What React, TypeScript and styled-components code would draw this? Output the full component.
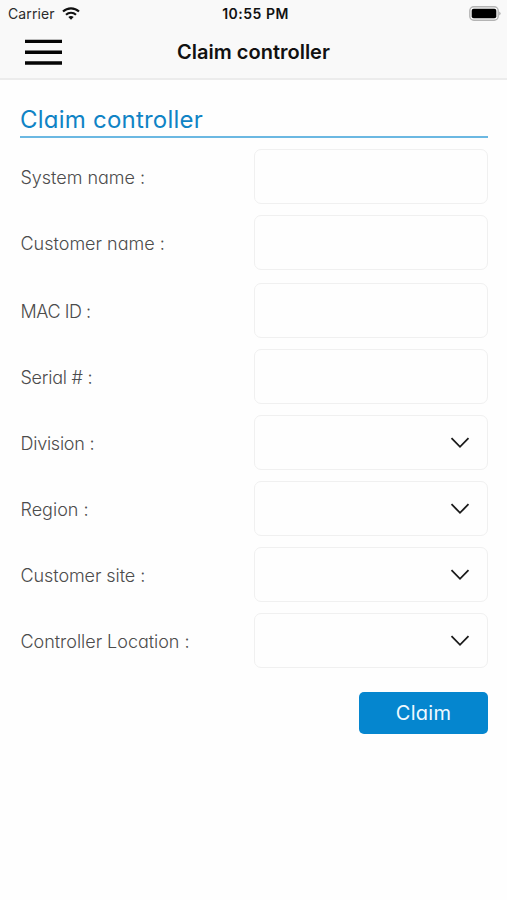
import React from "react";
import styled, { createGlobalStyle } from "styled-components";

const GlobalStyle = createGlobalStyle`
  * { box-sizing: border-box; }
  body { margin: 0; background: #fefefe; }
`;

const Screen = styled.div`
  width: 507px;
  height: 900px;
  overflow: hidden;
  background: #fefefe;
  font-family: Inter, sans-serif;
  color: #111;
`;

const Header = styled.header`
  height: 80px;
  background: #f9f9f9;
  border-bottom: 2px solid #ececec;
`;

const StatusBar = styled.div`
  display: grid;
  grid-template-columns: 1fr auto 1fr;
  align-items: center;
  height: 27px;
  padding: 0 6px 0 8px;
`;

const Carrier = styled.div`
  display: flex;
  align-items: center;
  gap: 7px;
  font-size: 14px;
  letter-spacing: 0.1px;
  color: #2b2b2b;
`;

const Clock = styled.div`
  padding-left: 2px;
  font-size: 14px;
  font-weight: 600;
  letter-spacing: 0.5px;
`;

const BatteryIcon = styled.svg`
  display: block;
  justify-self: end;
`;

const NavBar = styled.nav`
  display: grid;
  grid-template-columns: 1fr auto 1fr;
  align-items: center;
  height: 50px;
  padding: 0 25px;
`;

const MenuButton = styled.button`
  display: flex;
  flex-direction: column;
  gap: 7.5px;
  width: 37px;
  padding: 0;
  border: 0;
  background: none;
`;

const MenuIcon = styled.svg`
  display: block;
`;

const NavTitle = styled.h1`
  margin: 0;
  font-size: 20px;
  line-height: 26px;
  font-weight: 600;
  letter-spacing: 0;
`;

const Content = styled.main`
  padding: 24px 19px 0 20px;
  font-feature-settings: "cv11";
`;

const SectionTitle = styled.h2`
  margin: 0 0 11px;
  height: 34px;
  border-bottom: 2px solid #6bb8e2;
  font-size: 24px;
  line-height: 32px;
  font-weight: 400;
  letter-spacing: 0.22px;
  color: #0f83c5;
`;

const Form = styled.div`
  display: flex;
  flex-direction: column;
  gap: 11px;
`;

const Row = styled.label<{ $offset?: number }>`
  display: grid;
  grid-template-columns: 1fr 234px;
  align-items: center;
  height: 55px;
  margin-top: ${(p) => p.$offset ?? 0}px;
`;

const LabelText = styled.span<{ $tracking: number }>`
  padding: 2px 0 0 0.5px;
  font-size: 18px;
  font-weight: 300;
  line-height: 24px;
  letter-spacing: ${(p) => p.$tracking}px;
  white-space: nowrap;
  color: #4c4c4c;
`;

const Field = styled.span`
  display: flex;
  align-items: center;
  justify-content: flex-end;
  height: 55px;
  padding-right: 17px;
  border: 1.5px solid #f0f0f0;
  border-radius: 7px;
  background: #fefefe;
`;

const Actions = styled.div`
  display: flex;
  justify-content: flex-end;
  padding-top: 24px;
`;

const ClaimButton = styled.button`
  width: 129px;
  height: 42px;
  padding: 1px 0 0;
  border: 0;
  border-radius: 5px;
  background: #0586cf;
  color: #effaff;
  font: 400 20px/41px Inter, sans-serif;
  font-feature-settings: "cv11";
  letter-spacing: 0.3px;
`;

const fields = [
  { label: "System name :", tracking: -0.02 },
  { label: "Customer name :", tracking: 0 },
  { label: "MAC ID :", tracking: -0.45, offset: 2 },
  { label: "Serial # :", tracking: -0.25 },
  { label: "Division :", tracking: -0.25, select: true },
  { label: "Region :", tracking: 0, select: true },
  { label: "Customer site :", tracking: -0.08, select: true },
  { label: "Controller Location :", tracking: -0.03, select: true },
];

const Menu = () => (
  <MenuIcon width="37" height="26" viewBox="0 0 37 26" stroke="#050505" strokeWidth="3.4">
    <path d="M0 2.4h37M0 13.2h37M0 24h37" />
  </MenuIcon>
);

const Wifi = () => (
  <svg width="18" height="13" viewBox="0 0 18 13" fill="none" stroke="#111" strokeWidth="2.1">
    <path d="M1 4.6C5.4.3 12.6.3 17 4.6" />
    <path d="M4 7.7c2.8-2.7 7.2-2.7 10 0" />
    <path d="M6.3 10C7.9 8.5 10.1 8.5 11.7 10L9 12.7Z" fill="#111" stroke="none" />
  </svg>
);

const Battery = () => (
  <BatteryIcon width="32" height="15" viewBox="0 0 32 15">
    <rect x="0.8" y="0.8" width="28.4" height="13.4" rx="4" fill="#f9f9f9" stroke="#b4b4b4" strokeWidth="1.4" />
    <rect x="2.7" y="2.7" width="24.6" height="9.6" rx="2" fill="#000" />
    <path d="M30.4 5.4q2.2 2.1 0 4.2Z" fill="#999" />
  </BatteryIcon>
);

const Chevron = () => (
  <svg width="20" height="12" viewBox="0 0 20 12" fill="none" stroke="#1a1a1a" strokeWidth="1.8">
    <path d="M1.5 1.2 10 9.8l8.5-8.6" />
  </svg>
);

export default function App() {
  return (
    <Screen>
      <GlobalStyle />
      <Header>
        <StatusBar>
          <Carrier>Carrier <Wifi /></Carrier>
          <Clock>10:55 PM</Clock>
          <Battery />
        </StatusBar>
        <NavBar>
          <MenuButton aria-label="Menu"><Menu /></MenuButton>
          <NavTitle>Claim controller</NavTitle>
        </NavBar>
      </Header>
      <Content>
        <SectionTitle>Claim controller</SectionTitle>
        <Form>
          {fields.map((f) => (
            <Row key={f.label} $offset={f.offset}>
              <LabelText $tracking={f.tracking}>{f.label}</LabelText>
              <Field>{f.select && <Chevron />}</Field>
            </Row>
          ))}
        </Form>
        <Actions><ClaimButton>Claim</ClaimButton></Actions>
      </Content>
    </Screen>
  );
}
